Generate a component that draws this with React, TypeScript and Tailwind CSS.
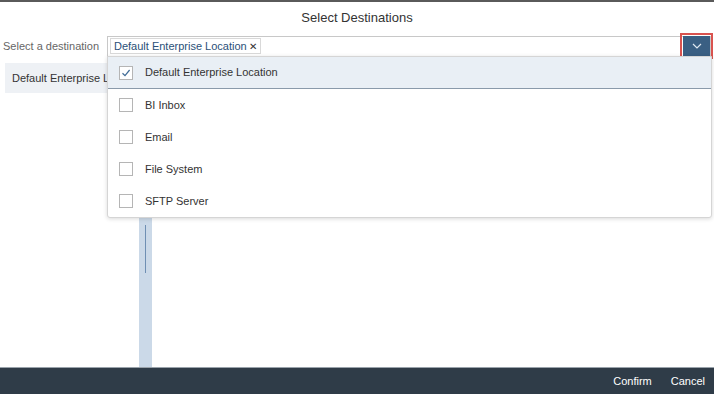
import React from "react";

const items = [
  { label: "Default Enterprise Location", checked: true },
  { label: "BI Inbox", checked: false },
  { label: "Email", checked: false },
  { label: "File System", checked: false },
  { label: "SFTP Server", checked: false },
];

function Check({ checked }: { checked: boolean }) {
  return (
    <div className="w-[14px] h-[14px] border border-[#b5b5b5] bg-white flex items-center justify-center">
      {checked && (
        <svg width="10" height="10" viewBox="0 0 10 10">
          <path d="M1.5 5.2 L4 7.6 L8.6 2" fill="none" stroke="#3f6b96" strokeWidth="1.2" />
        </svg>
      )}
    </div>
  );
}

export default function App() {
  return (
    <div
      className="relative w-[714px] h-[394px] bg-white overflow-hidden flex flex-col text-[#333]"
      style={{ fontFamily: '"Liberation Sans", Arial, sans-serif' }}
    >
      <div className="h-[2px] bg-[#5a5a5a]" />
      <div className="h-[31px] flex items-center justify-center text-[13px] text-[#333]">
        Select Destinations
      </div>
      <div className="flex items-center h-[26px]">
        <div className="w-[107px] pl-[3px] text-[11px] text-[#666]">Select a destination</div>
        <div className="flex-1 h-[21px] mr-[3px] border border-[#c8c8c8] bg-white flex items-center pl-[2px]">
          <div className="h-[16px] px-[3px] border border-[#d9d9d9] bg-white flex items-center text-[11px] text-[#2a5078] gap-[2px]">
            <span>Default Enterprise Location</span>
            <span className="text-[10px] text-[#333]">✕</span>
          </div>
          <div className="flex-1" />
          <div className="relative w-[27px] h-[20px] bg-[#3a5f83] flex items-center justify-center">
            <svg width="10" height="6" viewBox="0 0 10 6">
              <path d="M1 1 L5 5 L9 1" fill="none" stroke="#dfe8f1" strokeWidth="1.2" />
            </svg>
            <div className="absolute -left-[3px] -top-[3px] -right-[3px] -bottom-[3px] border-2 border-[#d9534f]" />
          </div>
        </div>
      </div>
      <div className="flex-1 flex">
        <div className="w-[139px] pt-[4px] pl-[5px]">
          <div className="h-[30px] bg-[#eef1f5] flex items-center pl-[7px] text-[11px] text-[#333] whitespace-nowrap overflow-hidden w-[102px]">
            Default Enterprise Location
          </div>
        </div>
        <div className="w-[13px] bg-[#cbd9e8] flex flex-col items-center pt-[157px]">
          <div className="w-[3px] h-[2px] bg-[#6f8fb3]" />
          <div className="w-[1px] h-[48px] bg-[#6f8fb3] mt-[7px]" />
        </div>
        <div className="flex-1" />
      </div>
      <div className="h-[27px] bg-[#2f3c48] border-t border-[#9aa3ab] flex items-center justify-end gap-[19px] pr-[9px] text-[11px] text-white">
        <span>Confirm</span>
        <span>Cancel</span>
      </div>

      <div className="absolute left-[107px] top-[56px] w-[605px] bg-white border border-[#d5d5d5] rounded-b-[3px] shadow-[0_1px_4px_rgba(0,0,0,0.15)]">
        {items.map((it) => (
          <div
            key={it.label}
            className={
              it.checked
                ? "h-[32px] flex items-center bg-[#e9eff5] border-b border-[#8a9aaa]"
                : "h-[32px] flex items-center"
            }
          >
            <div className="pl-[11px] w-[37px]">
              <Check checked={it.checked} />
            </div>
            <span className="text-[11px] text-[#333]">{it.label}</span>
          </div>
        ))}
      </div>
    </div>
  );
}
